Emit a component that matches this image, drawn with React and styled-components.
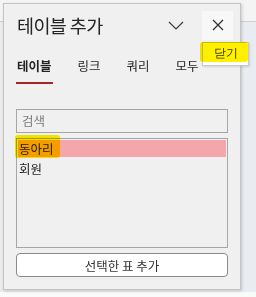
import React from 'react'
import styled, { createGlobalStyle } from 'styled-components'

const Global = createGlobalStyle`
  html, body { margin: 0; padding: 0; background: #f4f4f4; }
  body { font-family: "Noto Sans CJK KR", "Noto Sans", sans-serif; }
`

const Screen = styled.div`
  position: relative;
  width: 256px;
  height: 297px;
  overflow: hidden;
  display: flex;
  flex-direction: column;
`
const TopStrip = styled.div`
  height: 21px;
  background: #f4f4f4;
  border-bottom: 1px solid #cfcfcf;
`
const Canvas = styled.div`
  height: 270px;
  background: linear-gradient(to right, #ececec 0 4px, #e9edf1 4px);
`
const BottomStrip = styled.div`
  flex: 1;
  background: #fafafa;
`

const Panel = styled.div`
  position: absolute;
  left: 3px;
  top: 3px;
  width: 212px;
  height: 285px;
  background: #f0f0f0;
  border: 1px solid #c4c4c4;
  box-shadow: 1px 1px 3px rgba(0, 0, 0, 0.18);
  display: flex;
  flex-direction: column;
  padding: 0 12px;
`
const Header = styled.div`
  display: flex;
  align-items: center;
  height: 30px;
  margin-top: 6px;
  margin-right: -5px;
`
const Title = styled.h1`
  flex: 1;
  margin: 0;
  font-size: 18.5px;
  font-weight: 400;
  letter-spacing: -0.6px;
  line-height: 30px;
  color: #252423;
  padding-left: 1px;
`
const IconButton = styled.button`
  position: relative;
  width: 31px;
  height: 29px;
  border: none;
  padding: 0;
  margin-left: ${p => p.gap || 0}px;
  background: ${p => (p.hover ? '#f8f8f8' : 'transparent')};
  display: flex;
  align-items: center;
  justify-content: center;
`
const Tooltip = styled.div`
  position: absolute;
  left: 0;
  top: 31px;
  width: 45px;
  height: 22px;
  background: #fff;
  border: 1px solid #c8c8c8;
  box-shadow: 1px 1px 2px rgba(0, 0, 0, 0.12);
  font-size: 12px;
  line-height: 20px;
  color: #333;
  text-align: center;
  z-index: 2;
`
const Marker = styled.span`
  position: absolute;
  z-index: 3;
  left: ${p => p.x}px;
  top: ${p => p.y}px;
  width: ${p => p.w}px;
  height: ${p => p.h}px;
  background: #fff000;
  border-radius: 3px;
  mix-blend-mode: multiply;
  pointer-events: none;
`

const Tabs = styled.div`
  display: flex;
  gap: 24px;
  margin-top: 12px;
`
const Tab = styled.div`
  font-size: 12.5px;
  line-height: 19px;
  padding: 4px 1px 7px;
  color: #252423;
  font-weight: ${p => (p.active ? 700 : 400)};
  border-bottom: 2px solid ${p => (p.active ? '#a4262c' : 'transparent')};
`

const Search = styled.div`
  margin-top: 25px;
  height: 22px;
  border: 1px solid #a6a6a6;
  font-size: 12.5px;
  line-height: 22px;
  color: #7a7a7a;
  padding-left: 5px;
`
const List = styled.div`
  position: relative;
  margin-top: 5px;
  height: 107px;
  border: 1px solid #a6a6a6;
  padding: 1px 1px 0;
`
const Row = styled.div`
  height: 17px;
  font-size: 12.5px;
  line-height: 17px;
  color: #222;
  padding-left: 1px;
  margin-bottom: ${p => (p.selected ? 3 : 0)}px;
  background: ${p => (p.selected ? '#f5a6aa' : 'transparent')};
`
const AddButton = styled.button`
  margin-top: 5px;
  height: 24px;
  width: 100%;
  background: #fff;
  border: 1px solid #8a8a8a;
  border-radius: 4px;
  font-family: inherit;
  font-size: 12.5px;
  color: #333;
  padding: 0;
`

const Chevron = () => (
  <svg width="16" height="9" viewBox="0 0 16 9">
    <polyline points="1,1 8,8 15,1" fill="none" stroke="#3a3a3a" strokeWidth="1.2" />
  </svg>
)
const Close = () => (
  <svg width="12" height="12" viewBox="0 0 12 12">
    <path d="M1 1 L11 11 M11 1 L1 11" stroke="#333" strokeWidth="1.3" />
  </svg>
)

const App = () => {
  return (
    <Screen>
      <Global />
      <TopStrip />
      <Canvas />
      <BottomStrip />
      <Panel>
        <Header>
          <Title>테이블 추가</Title>
          <IconButton><Chevron /></IconButton>
          <IconButton gap={11} hover>
            <Close />
            <Tooltip>닫기</Tooltip>
            <Marker x={-2} y={31} w={48} h={20} />
          </IconButton>
        </Header>
        <Tabs>
          <Tab active>테이블</Tab>
          <Tab>링크</Tab>
          <Tab>쿼리</Tab>
          <Tab>모두</Tab>
        </Tabs>
        <Search>검색</Search>
        <List>
          <Row selected>동아리</Row>
          <Row>회원</Row>
          <Marker x={-2} y={-4} w={45} h={23} />
        </List>
        <AddButton>선택한 표 추가</AddButton>
      </Panel>
    </Screen>
  )
}

export default App
